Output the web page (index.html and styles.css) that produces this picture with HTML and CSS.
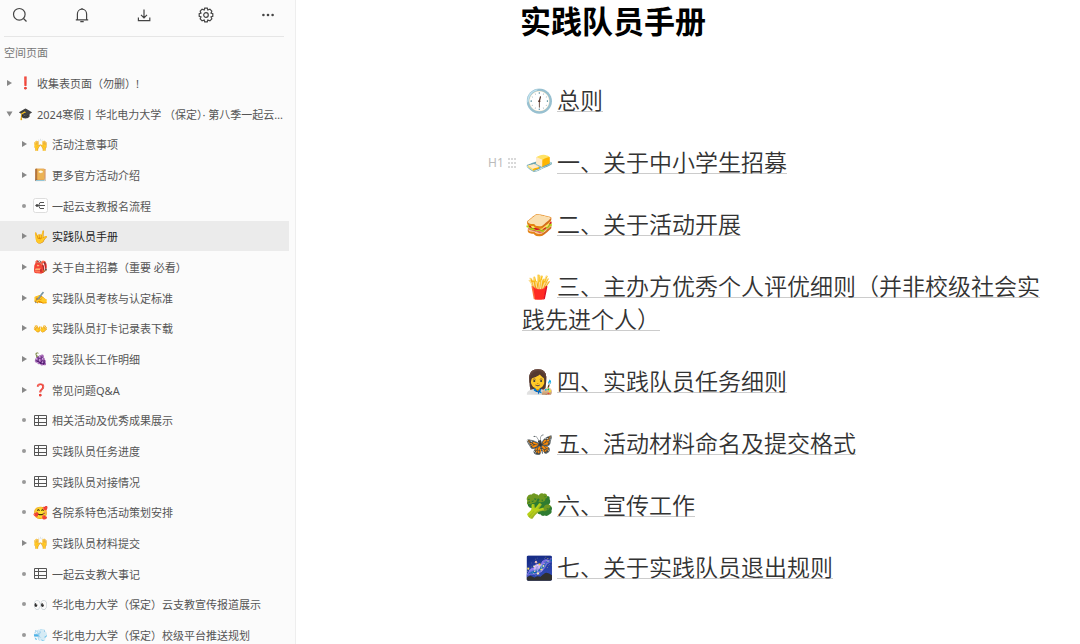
FILE: index.html
```html
<!DOCTYPE html>
<html lang="zh-CN">
<head>
    <meta charset="UTF-8">
    <meta name="viewport" content="width=device-width, initial-scale=1.0">
    <title>实践队员手册</title>
    <link rel="stylesheet" href="styles.css">
</head>
<body>

    <aside class="sidebar">
        <div class="toolbar">
            <button type="button" aria-label="搜索">
                <svg viewBox="0 0 16 16"><circle cx="7.3" cy="7.3" r="5.8"/><path d="M11.5 11.5L14.5 14.5"/></svg>
            </button>
            <button type="button" aria-label="通知">
                <svg viewBox="0 0 16 16"><path d="M1.8 12.8H14.2M3.4 12.6V7a4.6 4.8 0 0 1 9.2 0V12.6M6.3 14.6H9.7M8 1V2.2"/></svg>
            </button>
            <button type="button" aria-label="导入">
                <svg viewBox="0 0 16 16"><path d="M8 2.5V10.5M5 7.8L8 10.8L11 7.8M2.4 10.5V13.6H13.8V10.5"/></svg>
            </button>
            <button type="button" aria-label="设置">
                <svg viewBox="0 0 16 16"><path d="M6.7 1.2H9.3L9.8 3L11.9 2.2L13.8 4.1L13 6.2L14.8 6.7V9.3L13 9.8L13.8 11.9L11.9 13.8L9.8 13L9.3 14.8H6.7L6.2 13L4.1 13.8L2.2 11.9L3 9.8L1.2 9.3V6.7L3 6.2L2.2 4.1L4.1 2.2L6.2 3Z"/><circle cx="8" cy="8" r="2.3"/></svg>
            </button>
            <button type="button" aria-label="更多">
                <svg class="dots" viewBox="0 0 16 16"><circle cx="3.4" cy="8" r="1.3"/><circle cx="8" cy="8" r="1.3"/><circle cx="12.6" cy="8" r="1.3"/></svg>
            </button>
        </div>

        <h2 class="group-name">空间页面</h2>

        <ul class="tree">
            <li class="item">
                <button type="button" class="twist" aria-label="展开"></button>
                <span class="icon">❗</span>
                <a href="#">收集表页面（勿删）!</a>
            </li>
            <li class="item">
                <button type="button" class="twist open" aria-label="收起"></button>
                <span class="icon">🎓</span>
                <a href="#">2024寒假丨华北电力大学 （保定）· 第八季一起云支教</a>
            </li>
            <li class="item child">
                <button type="button" class="twist" aria-label="展开"></button>
                <span class="icon">🙌</span>
                <a href="#">活动注意事项</a>
            </li>
            <li class="item child">
                <button type="button" class="twist" aria-label="展开"></button>
                <span class="icon">📔</span>
                <a href="#">更多官方活动介绍</a>
            </li>
            <li class="item child">
                <span class="dot"></span>
                <span class="icon"><svg class="mind" viewBox="0 0 15 15"><rect x=".5" y=".5" width="14" height="14" rx="2"/><path d="M2.5 7.5H12M7 4.5H11M7 10.5H11M7 4.5L5.5 7.5L7 10.5"/><circle cx="4" cy="7.5" r="1"/></svg></span>
                <a href="#">一起云支教报名流程</a>
            </li>
            <li class="item child active">
                <button type="button" class="twist" aria-label="展开"></button>
                <span class="icon">🤟</span>
                <a href="#">实践队员手册</a>
            </li>
            <li class="item child">
                <button type="button" class="twist" aria-label="展开"></button>
                <span class="icon">🎒</span>
                <a href="#">关于自主招募（重要 必看）</a>
            </li>
            <li class="item child">
                <button type="button" class="twist" aria-label="展开"></button>
                <span class="icon">✍️</span>
                <a href="#">实践队员考核与认定标准</a>
            </li>
            <li class="item child">
                <button type="button" class="twist" aria-label="展开"></button>
                <span class="icon">👐</span>
                <a href="#">实践队员打卡记录表下载</a>
            </li>
            <li class="item child">
                <button type="button" class="twist" aria-label="展开"></button>
                <span class="icon">🍇</span>
                <a href="#">实践队长工作明细</a>
            </li>
            <li class="item child">
                <button type="button" class="twist" aria-label="展开"></button>
                <span class="icon">❓</span>
                <a href="#">常见问题Q&amp;A</a>
            </li>
            <li class="item child">
                <span class="dot"></span>
                <span class="icon"><svg class="table" viewBox="0 0 15 15"><path d="M1.5 2.5H13.5V12.5H1.5ZM1.5 5.5H13.5M1.5 9.5H13.5M5.5 2.5V12.5"/></svg></span>
                <a href="#">相关活动及优秀成果展示</a>
            </li>
            <li class="item child">
                <span class="dot"></span>
                <span class="icon"><svg class="table" viewBox="0 0 15 15"><path d="M1.5 2.5H13.5V12.5H1.5ZM1.5 5.5H13.5M1.5 9.5H13.5M5.5 2.5V12.5"/></svg></span>
                <a href="#">实践队员任务进度</a>
            </li>
            <li class="item child">
                <span class="dot"></span>
                <span class="icon"><svg class="table" viewBox="0 0 15 15"><path d="M1.5 2.5H13.5V12.5H1.5ZM1.5 5.5H13.5M1.5 9.5H13.5M5.5 2.5V12.5"/></svg></span>
                <a href="#">实践队员对接情况</a>
            </li>
            <li class="item child">
                <span class="dot"></span>
                <span class="icon">🥰</span>
                <a href="#">各院系特色活动策划安排</a>
            </li>
            <li class="item child">
                <button type="button" class="twist" aria-label="展开"></button>
                <span class="icon">🙌</span>
                <a href="#">实践队员材料提交</a>
            </li>
            <li class="item child">
                <span class="dot"></span>
                <span class="icon"><svg class="table" viewBox="0 0 15 15"><path d="M1.5 2.5H13.5V12.5H1.5ZM1.5 5.5H13.5M1.5 9.5H13.5M5.5 2.5V12.5"/></svg></span>
                <a href="#">一起云支教大事记</a>
            </li>
            <li class="item child">
                <span class="dot"></span>
                <span class="icon">👀</span>
                <a href="#">华北电力大学（保定）云支教宣传报道展示</a>
            </li>
            <li class="item child">
                <span class="dot"></span>
                <span class="icon">💨</span>
                <a href="#">华北电力大学（保定）校级平台推送规划</a>
            </li>
        </ul>
    </aside>

    <main class="page">
        <h1>实践队员手册</h1>

        <div class="block">
            <h2><a href="#"><span class="emoji">🕧</span>总则</a></h2>
        </div>
        <div class="block">
            <button type="button" class="handle">H1<svg viewBox="0 0 8 12"><circle cx="1" cy="2" r="1"/><circle cx="4" cy="2" r="1"/><circle cx="7" cy="2" r="1"/><circle cx="1" cy="6" r="1"/><circle cx="4" cy="6" r="1"/><circle cx="7" cy="6" r="1"/><circle cx="1" cy="10" r="1"/><circle cx="4" cy="10" r="1"/><circle cx="7" cy="10" r="1"/></svg></button>
            <h2><a href="#"><span class="emoji">🧈</span>一、关于中小学生招募</a></h2>
        </div>
        <div class="block">
            <h2><a href="#"><span class="emoji">🥪</span>二、关于活动开展</a></h2>
        </div>
        <div class="block">
            <h2><a href="#"><span class="emoji">🍟</span>三、主办方优秀个人评优细则（并非校级社会实践先进个人）</a></h2>
        </div>
        <div class="block">
            <h2><a href="#"><span class="emoji">👩‍🎨</span>四、实践队员任务细则</a></h2>
        </div>
        <div class="block">
            <h2><a href="#"><span class="emoji">🦋</span>五、活动材料命名及提交格式</a></h2>
        </div>
        <div class="block">
            <h2><a href="#"><span class="emoji">🥦</span>六、宣传工作</a></h2>
        </div>
        <div class="block">
            <h2><a href="#"><span class="emoji">🌌</span>七、关于实践队员退出规则</a></h2>
        </div>
    </main>

</body>
</html>
```
FILE: styles.css
```css
* {
    box-sizing: border-box;
}
body {
    margin: 0;
    display: flex;
    height: 100vh;
    overflow: hidden;
    background-color: #fff;
    color: #333;
    font-family: "Noto Sans", "Noto Sans CJK SC", sans-serif;
}
button {
    padding: 0;
    border: none;
    background: none;
    font-family: inherit;
    cursor: pointer;
}
a {
    color: inherit;
}

/* sidebar */
.sidebar {
    flex: 0 0 296px;
    overflow: hidden;
    background-color: #fbfbfb;
    border-right: 1px solid #eee;
}
.toolbar {
    display: flex;
    justify-content: space-between;
    margin: 0 11px 0 4px;
    padding: 7px 8px 13px;
    border-bottom: 1px solid #e6e6e6;
}
.toolbar button {
    width: 16px;
    height: 16px;
}
.toolbar svg {
    display: block;
    fill: none;
    stroke: #444;
    stroke-width: 1.2;
}
.toolbar .dots {
    fill: #444;
    stroke: none;
}
.group-name {
    margin: 0;
    padding: 8px 4px 6px;
    font-size: 11px;
    line-height: 16px;
    font-weight: normal;
    color: #777;
}
.tree {
    display: grid;
    grid-template-columns: minmax(0, 1fr);
    grid-auto-rows: 31px 31px 30px;
    margin: 0;
    padding: 0;
    list-style: none;
    font-size: 11px;
}
.item {
    display: flex;
    align-items: center;
    gap: 4px;
    margin-right: 6px;
    padding: 0 4px;
    color: #555;
}
.child {
    padding-left: 19px;
}
.active {
    background-color: #ebebeb;
    color: #222;
}
.item a {
    flex: 1;
    min-width: 0;
    overflow: hidden;
    white-space: nowrap;
    text-overflow: ellipsis;
    text-decoration: none;
}
.twist,
.dot {
    flex: 0 0 10px;
    display: flex;
    align-items: center;
    justify-content: center;
}
.twist::before {
    content: "";
    border-left: 5px solid #888;
    border-top: 3px solid transparent;
    border-bottom: 3px solid transparent;
}
.twist.open::before {
    transform: rotate(90deg);
}
.dot::before {
    content: "";
    width: 4px;
    height: 4px;
    border-radius: 50%;
    background-color: #999;
}
.icon {
    flex: 0 0 15px;
    display: flex;
    justify-content: center;
    font-size: 12px;
}
.icon svg {
    width: 15px;
    height: 15px;
    fill: none;
    stroke: #555;
}
.mind rect {
    fill: #fff;
    stroke: #ddd;
}
.mind circle {
    fill: #333;
}

/* document */
.page {
    flex: 1;
    min-width: 0;
    padding: 0 30px 0 192px;
}
h1 {
    margin: 0 0 41px 32px;
    font-size: 31px;
    line-height: 43px;
    color: #000;
}
.block {
    display: grid;
    grid-template-columns: 34px 1fr;
    margin-bottom: 29px;
}
.block h2 {
    grid-column: 2;
    margin: 0;
    font-size: 23px;
    line-height: 33px;
    font-weight: 350;
}
.block a {
    text-decoration: underline 1px #ccc;
    text-underline-offset: 2px;
    text-decoration-skip-ink: none;
}
.emoji {
    display: inline-block;
    margin: 0 3px;
}
.handle {
    display: flex;
    align-items: center;
    gap: 4px;
    height: 33px;
    color: #bbb;
    font-size: 12px;
}
.handle svg {
    width: 8px;
    height: 12px;
    fill: #ccc;
}
```
